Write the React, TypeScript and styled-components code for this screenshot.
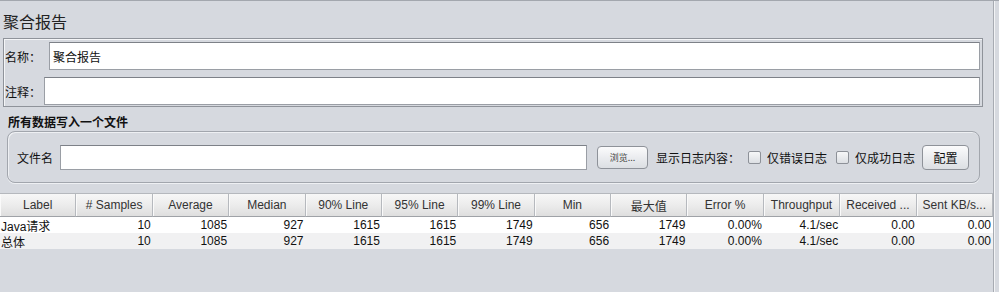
import React from "react";
import styled, { createGlobalStyle } from "styled-components";

const Global = createGlobalStyle`
  html, body { margin: 0; padding: 0; background: #d6d9df; }
  body { font-family: "Liberation Sans", "Noto Sans CJK SC", sans-serif; }
`;

const Page = styled.div`
  width: 999px;
  height: 292px;
  box-sizing: border-box;
  border-top: 1px solid #a3a7ae;
  background: #d6d9df;
  display: flex;
  overflow: hidden;
`;

const Main = styled.div`
  width: 993px;
  flex: none;
  display: flex;
  flex-direction: column;
  border-right: 1px solid #a7abb2;
  box-shadow: 1px 0 0 #f2f3f5;
`;

const Title = styled.div`
  height: 37px;
  box-sizing: border-box;
  padding: 10px 0 0 3px;
  font-family: "Noto Sans CJK SC", sans-serif;
  font-size: 16px;
  line-height: 20px;
  color: #222;
`;

const NamePanel = styled.div`
  margin: 0 10px 0 3px;
  height: 69px;
  box-sizing: border-box;
  border: 1px solid #8f939a;
  box-shadow: inset 1px 1px 0 #f4f5f7;
  padding: 3px 2px 0 1px;
  display: flex;
  flex-direction: column;
  gap: 7px;
`;

const FieldRow = styled.div`
  display: flex;
  align-items: center;
  height: 28px;
`;

const FieldLabel = styled.span<{ $w: number }>`
  width: ${(p) => p.$w}px;
  flex: none;
  font-family: "Noto Sans CJK SC", sans-serif;
  font-size: 12px;
  color: #111;
`;

const TextBox = styled.div<{ $h?: number }>`
  flex: 1;
  height: ${(p) => p.$h ?? 28}px;
  box-sizing: border-box;
  background: #fff;
  border: 1px solid #9a9ea5;
  border-top-color: #7d8188;
  padding: 0 3px;
  display: flex;
  align-items: center;
  font-family: "Noto Sans CJK SC", sans-serif;
  font-size: 12px;
  color: #111;
`;

const SectionTitle = styled.div`
  margin: 6px 0 0 8px;
  height: 17px;
  font-family: "Noto Sans CJK SC", sans-serif;
  font-weight: bold;
  font-size: 12px;
  line-height: 17px;
  color: #111;
`;

const FilePanel = styled.div`
  margin: 1px 13px 0 7px;
  height: 52px;
  box-sizing: border-box;
  border: 1px solid #a2a6ad;
  border-radius: 8px;
  box-shadow: inset 1px 1px 0 #eef0f3, 0 1px 0 #eef0f3;
  display: flex;
  align-items: center;
  padding: 0 0 0 9px;
  font-family: "Noto Sans CJK SC", sans-serif;
  font-size: 12px;
  color: #111;
`;

const Text = styled.span<{ $ml?: number }>`
  margin-left: ${(p) => p.$ml ?? 0}px;
  white-space: nowrap;
`;

const FileBox = styled(TextBox)`
  flex: none;
  width: 527px;
  margin-left: 7px;
`;

const Button = styled.div<{ $w: number; $ml: number; $small?: boolean }>`
  width: ${(p) => p.$w}px;
  height: ${(p) => (p.$small ? 23 : 25)}px;
  margin-left: ${(p) => p.$ml}px;
  box-sizing: border-box;
  border: 1px solid #8e9299;
  border-radius: 4px;
  background: linear-gradient(#fbfbfc, #e9ebee 55%, #dcdfe3);
  display: flex;
  align-items: center;
  justify-content: center;
  font-size: ${(p) => (p.$small ? 9 : 12)}px;
  color: ${(p) => (p.$small ? "#444" : "#111")};
`;

const Check = styled.span<{ $ml: number }>`
  width: 13px;
  height: 13px;
  margin-left: ${(p) => p.$ml}px;
  box-sizing: border-box;
  border: 1px solid #8d9198;
  border-radius: 2px;
  background: linear-gradient(#f6f7f8, #dcdfe3);
  flex: none;
`;

const Table = styled.div`
  margin-top: 10px;
  display: flex;
  flex-direction: column;
  font-family: "Liberation Sans", "Noto Sans CJK SC", sans-serif;
  font-size: 12px;
`;

const Grid = styled.div<{ $bg: string; $h: number }>`
  display: grid;
  grid-template-columns: repeat(13, 1fr);
  height: ${(p) => p.$h}px;
  background: ${(p) => p.$bg};
`;

const HeadCell = styled.div`
  display: flex;
  align-items: center;
  justify-content: center;
  box-sizing: border-box;
  border-top: 1px solid #b5b8bd;
  border-bottom: 1px solid #9fa2a7;
  border-right: 1px solid #b6b9be;
  box-shadow: inset 1px 0 0 #fafafa;
  background: linear-gradient(#f7f7f7, #ececec 50%, #dedede);
  color: #333;
  white-space: nowrap;
  overflow: hidden;
`;

const Cell = styled.div<{ $left?: boolean }>`
  display: flex;
  align-items: center;
  justify-content: ${(p) => (p.$left ? "flex-start" : "flex-end")};
  padding: ${(p) => (p.$left ? "0 0 0 1px" : "0 2px 0 0")};
  color: #111;
  white-space: nowrap;
  overflow: hidden;
`;

const headers = [
  "Label",
  "# Samples",
  "Average",
  "Median",
  "90% Line",
  "95% Line",
  "99% Line",
  "Min",
  "最大值",
  "Error %",
  "Throughput",
  "Received ...",
  "Sent KB/s...",
];

const rows = [
  ["Java请求", "10", "1085", "927", "1615", "1615", "1749", "656", "1749", "0.00%", "4.1/sec", "0.00", "0.00"],
  ["总体", "10", "1085", "927", "1615", "1615", "1749", "656", "1749", "0.00%", "4.1/sec", "0.00", "0.00"],
];

export default function App() {
  return (
    <>
      <Global />
      <Page>
        <Main>
          <Title>聚合报告</Title>
          <NamePanel>
            <FieldRow>
              <FieldLabel $w={44}>名称：</FieldLabel>
              <TextBox>聚合报告</TextBox>
            </FieldRow>
            <FieldRow>
              <FieldLabel $w={39}>注释：</FieldLabel>
              <TextBox />
            </FieldRow>
          </NamePanel>
          <SectionTitle>所有数据写入一个文件</SectionTitle>
          <FilePanel>
            <Text>文件名</Text>
            <FileBox $h={25} />
            <Button $w={51} $ml={10} $small>
              浏览...
            </Button>
            <Text $ml={8}>显示日志内容：</Text>
            <Check $ml={8} />
            <Text $ml={6}>仅错误日志</Text>
            <Check $ml={9} />
            <Text $ml={6}>仅成功日志</Text>
            <Button $w={47} $ml={7}>
              配置
            </Button>
          </FilePanel>
          <Table>
            <Grid $bg="#e4e4e4" $h={24}>
              {headers.map((h) => (
                <HeadCell key={h}>{h}</HeadCell>
              ))}
            </Grid>
            {rows.map((r, i) => (
              <Grid key={i} $bg={i === 0 ? "#ffffff" : "#f1f1f2"} $h={16}>
                {r.map((c, j) => (
                  <Cell key={j} $left={j === 0}>
                    {c}
                  </Cell>
                ))}
              </Grid>
            ))}
          </Table>
        </Main>
      </Page>
    </>
  );
}
